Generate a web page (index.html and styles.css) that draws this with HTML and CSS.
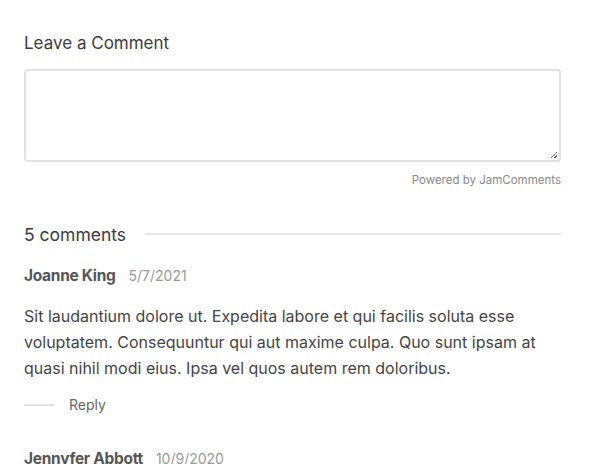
FILE: index.html
```html
<!DOCTYPE html>
<html>
<head>
<meta charset="utf-8">
<link rel="stylesheet" href="styles.css">
</head>
<body>
<div class="wrap">
  <h2 class="title">Leave a Comment</h2>
  <div class="textarea"><span class="grip"></span></div>
  <div class="powered">Powered by JamComments</div>
  <div class="count-row">
    <span class="count">5 comments</span>
    <span class="rule"></span>
  </div>
  <div class="comment">
    <div class="meta"><span class="name">Joanne King</span><span class="date">5/7/2021</span></div>
    <p class="body">Sit laudantium dolore ut. Expedita labore et qui facilis soluta esse voluptatem. Consequuntur qui aut maxime culpa. Quo sunt ipsam at quasi nihil modi eius. Ipsa vel quos autem rem doloribus.</p>
    <div class="reply-row"><span class="reply-line"></span><span class="reply">Reply</span></div>
  </div>
  <div class="comment">
    <div class="meta"><span class="name">Jennyfer Abbott</span><span class="date">10/9/2020</span></div>
  </div>
</div>
</body>
</html>
```
FILE: styles.css
```css
html, body { margin: 0; padding: 0; background: #fff; }
body { font-family: "Inter", "Noto Sans", sans-serif; color: #444; }
.wrap { width: 537px; padding: 0 0 0 24px; display: flex; flex-direction: column; }
.title { margin: 31px 0 0; font-size: 17px; font-weight: 400; line-height: 24px; color: #3c3c3c; }
.textarea { margin-top: 14px; height: 89px; border: 2px solid #e2e2e2; border-radius: 4px; position: relative; }
.grip { position: absolute; right: 2px; bottom: 2px; width: 6px; height: 6px;
  background: linear-gradient(135deg, transparent 45%, #777 45%, #777 55%, transparent 55%, transparent 75%, #777 75%, #777 85%, transparent 85%); }
.powered { margin-top: 10px; text-align: right; font-size: 11.5px; color: #888; line-height: 16px; }
.count-row { margin-top: 35px; display: flex; align-items: center; gap: 19px; }
.count { font-size: 17.5px; line-height: 24px; color: #3c3c3c; }
.rule { flex: 1; height: 2px; background: #e6e6e6; margin-top: -2px; }
.comment { margin-top: 19px; }
.meta { display: flex; align-items: baseline; gap: 13px; line-height: 20px; }
.name { font-weight: 700; font-size: 15.5px; color: #555; letter-spacing: -0.3px; }
.date { font-size: 14px; color: #999; }
.body { margin: 17px 0 0; font-size: 16px; line-height: 26px; color: #444; }
.reply-row { margin-top: 14px; display: flex; align-items: center; gap: 15px; }
.reply-line { width: 30px; height: 2px; background: #e2e2e2; }
.reply { font-size: 14px; color: #666; line-height: 20px; }
.comment + .comment { margin-top: 34px; }
```
